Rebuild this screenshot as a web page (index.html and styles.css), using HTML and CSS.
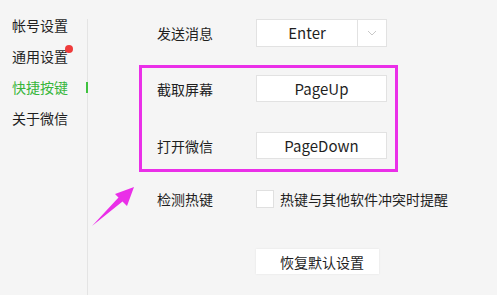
FILE: index.html
```html
<!DOCTYPE html>
<html lang="zh-CN">
<head>
  <meta charset="UTF-8">
  <title>快捷按键</title>
  <link rel="stylesheet" href="styles.css">
</head>
<body>
  <div class="window">
    <!-- Left menu -->
    <ul class="menu">
      <li>帐号设置</li>
      <li class="has-dot">通用设置</li>
      <li class="active">快捷按键</li>
      <li>关于微信</li>
    </ul>

    <!-- Settings panel -->
    <div class="panel">
      <div class="row row-first">
        <span class="label">发送消息</span>
        <div class="key-box select">
          <span class="key-value">Enter</span>
          <span class="caret">
            <svg width="10" height="6" viewBox="0 0 10 6"><path d="M1 1 L5 5 L9 1" fill="none" stroke="#c8c8c8" stroke-width="1"/></svg>
          </span>
        </div>
      </div>
      <div class="row row-second">
        <span class="label">截取屏幕</span>
        <div class="key-box">PageUp</div>
      </div>
      <div class="row row-third">
        <span class="label">打开微信</span>
        <div class="key-box">PageDown</div>
      </div>
      <div class="row row-check">
        <span class="label">检测热键</span>
        <span class="checkbox"></span>
        <span class="check-text">热键与其他软件冲突时提醒</span>
      </div>
      <div class="row row-reset">
        <span class="label"></span>
        <button class="reset-btn">恢复默认设置</button>
      </div>
    </div>

    <!-- Annotation overlays -->
    <div class="highlight"></div>
    <svg class="arrow" width="50" height="48" viewBox="0 0 50 48">
      <polygon points="46,5 39,24 34.5,19.5 4,44 30.5,15.5 27,12" fill="#ea2fe8"/>
    </svg>
  </div>
</body>
</html>
```

FILE: styles.css
```css
body {
  margin: 0;
  padding: 0;
  background: #f5f5f5;
  font-family: "Noto Sans CJK SC", "Noto Sans", sans-serif;
  font-size: 14px;
  color: #1f1f1f;
}
.window {
  position: relative;
  display: flex;
  width: 497px;
  height: 295px;
  overflow: hidden;
}
/* Left menu */
.menu {
  list-style: none;
  margin: 0;
  padding: 0;
  width: 88px;
  box-sizing: border-box;
  margin-top: 19px;
  border-right: 1px solid #e4e4e4;
}
.menu li {
  position: relative;
  padding-left: 12px;
  height: 31px;
  line-height: 12px;
}
.menu li.has-dot::after {
  content: "";
  position: absolute;
  left: 65px;
  top: -5px;
  width: 8px;
  height: 8px;
  border-radius: 50%;
  background: #ef3b3b;
}
.menu li.active {
  color: #37b63b;
}
.menu li.active::after {
  content: "";
  position: absolute;
  right: -1px;
  top: 1px;
  width: 2px;
  height: 11px;
  background: #3fc23f;
}
/* Settings panel */
.panel {
  flex: 1;
  padding-left: 69px;
  padding-top: 19px;
}
.row {
  display: flex;
  align-items: center;
  height: 27px;
}
.row-first {
  height: 28px;
}
.row-second {
  margin-top: 28px;
}
.row-third {
  margin-top: 30px;
}
.row-check {
  margin-top: 26px;
}
.row-reset {
  margin-top: 37px;
  height: 25px;
}
.label {
  width: 99px;
  flex-shrink: 0;
}
.key-box {
  width: 131px;
  height: 100%;
  box-sizing: border-box;
  background: #fff;
  border: 1px solid #e2e2e2;
  display: flex;
  align-items: center;
  justify-content: center;
  font-size: 15px;
}
.key-box.select {
  justify-content: flex-start;
}
.key-value {
  width: 100px;
  text-align: center;
  border-right: 1px solid #e2e2e2;
  height: 100%;
  line-height: 26px;
}
.caret {
  flex: 1;
  display: flex;
  align-items: center;
  justify-content: center;
}
.checkbox {
  width: 18px;
  height: 18px;
  box-sizing: border-box;
  background: #fff;
  border: 1px solid #e0e0e0;
  flex-shrink: 0;
}
.check-text {
  margin-left: 6px;
}
.reset-btn {
  width: 123px;
  height: 25px;
  background: #fff;
  border: none;
  box-shadow: 0 0 2px rgba(0, 0, 0, 0.08);
  font-family: inherit;
  font-size: 14px;
  color: #1f1f1f;
  text-align: left;
  padding: 0 0 0 24px;
}
/* Highlight box and arrow drawn over the screenshot */
.highlight {
  position: absolute;
  left: 139px;
  top: 65px;
  width: 253px;
  height: 101px;
  border: 3px solid #ea2fe8;
}
.arrow {
  position: absolute;
  left: 88px;
  top: 182px;
}
```
